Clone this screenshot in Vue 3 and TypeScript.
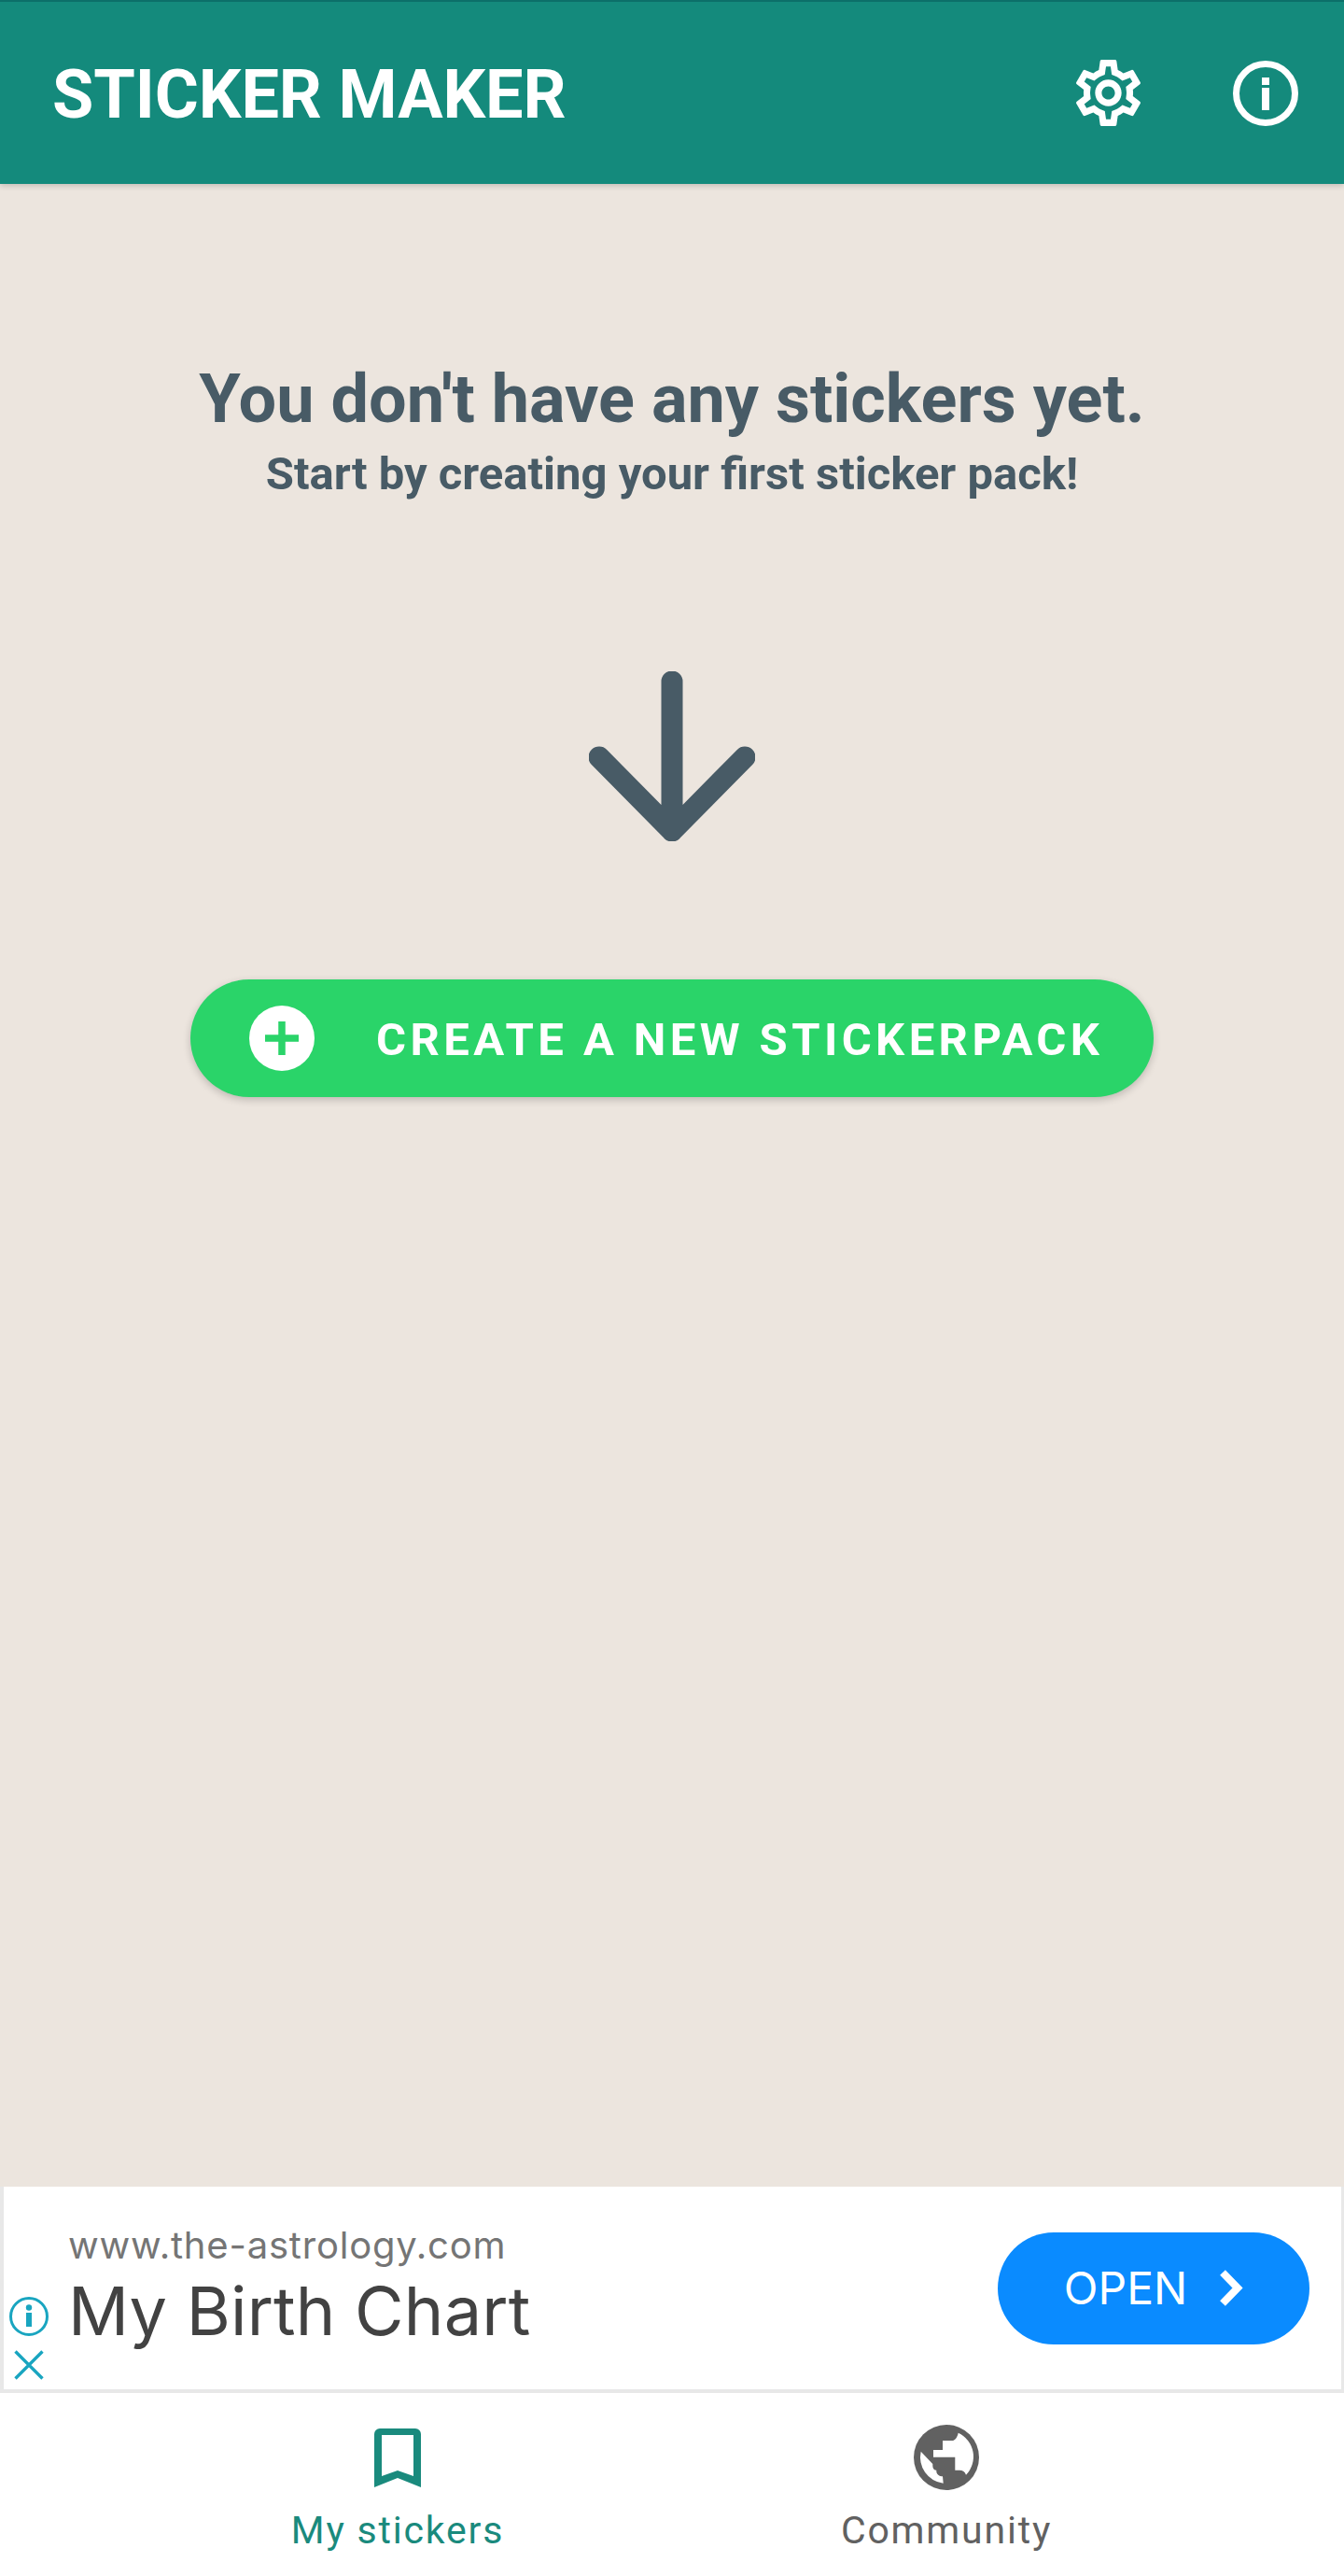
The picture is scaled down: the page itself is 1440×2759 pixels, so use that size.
<script setup lang="ts">
const heading = "You don't have any stickers yet."
const subheading = 'Start by creating your first sticker pack!'
</script>

<template>
  <div class="app">
    <header class="bar">
      <h2 class="brand">STICKER MAKER</h2>
      <div class="bar-actions">
        <svg class="gear" viewBox="0 0 24 24" aria-hidden="true">
          <path fill="#fff" d="M19.43 12.98c.04-.32.07-.64.07-.98 0-.34-.03-.66-.07-.98l2.11-1.65c.19-.15.24-.42.12-.64l-2-3.46c-.09-.16-.26-.25-.44-.25-.06 0-.12.01-.17.03l-2.49 1c-.52-.4-1.08-.73-1.69-.98l-.38-2.65C14.46 2.18 14.25 2 14 2h-4c-.25 0-.46.18-.49.42l-.38 2.65c-.61.25-1.17.59-1.69.98l-2.49-1c-.06-.02-.12-.03-.18-.03-.17 0-.34.09-.43.25l-2 3.46c-.13.22-.07.49.12.64l2.11 1.65c-.04.32-.07.65-.07.98 0 .33.03.66.07.98l-2.11 1.65c-.19.15-.24.42-.12.64l2 3.46c.09.16.26.25.44.25.06 0 .12-.01.17-.03l2.49-1c.52.4 1.08.73 1.69.98l.38 2.65c.03.24.24.42.49.42h4c.25 0 .46-.18.49-.42l.38-2.65c.61-.25 1.17-.59 1.69-.98l2.49 1c.06.02.12.03.18.03.17 0 .34-.09.43-.25l2-3.46c.12-.22.07-.49-.12-.64l-2.11-1.65zm-1.98-1.71c.04.31.05.52.05.73 0 .21-.02.43-.05.73l-.14 1.13.89.7 1.08.84-.7 1.21-1.27-.51-1.04-.42-.9.68c-.43.32-.84.56-1.25.73l-1.06.43-.16 1.13-.2 1.35h-1.4l-.19-1.35-.16-1.13-1.06-.43c-.43-.18-.83-.41-1.23-.71l-.91-.7-1.06.43-1.27.51-.7-1.21 1.08-.84.89-.7-.14-1.13c-.03-.31-.05-.54-.05-.74s.02-.43.05-.73l.14-1.13-.89-.7-1.08-.84.7-1.21 1.27.51 1.04.42.9-.68c.43-.32.84-.56 1.25-.73l1.06-.43.16-1.13.2-1.35h1.39l.19 1.35.16 1.13 1.06.43c.43.18.83.41 1.23.71l.91.7 1.06-.43 1.27-.51.7 1.21-1.07.85-.89.7.14 1.13zM12 8c-2.21 0-4 1.79-4 4s1.79 4 4 4 4-1.79 4-4-1.79-4-4-4zm0 6c-1.1 0-2-.9-2-2s.9-2 2-2 2 .9 2 2-.9 2-2 2z" />
        </svg>
        <svg class="info" viewBox="0 0 70 70" aria-hidden="true">
          <circle cx="35" cy="35" r="31.500" fill="none" stroke="#fff" stroke-width="7" />
          <rect x="31" y="18" width="8" height="8" fill="#fff" />
          <rect x="31" y="29" width="8" height="24" fill="#fff" />
        </svg>
      </div>
    </header>

    <main class="content">
      <h1 class="title">{{ heading }}</h1>
      <p class="subtitle">{{ subheading }}</p>
      <svg class="arrow" viewBox="0 0 178 182" aria-hidden="true">
        <path d="M89 11V171M11 92L89 171L167 92" fill="none" stroke="#485B66" stroke-width="23" stroke-linecap="round" stroke-linejoin="round" />
      </svg>
      <button class="create" type="button">
        <svg class="plus" viewBox="0 0 70 70" aria-hidden="true">
          <circle cx="35" cy="35" r="35" fill="#fff" />
          <path d="M17 35H53M35 17V53" stroke="#2AD469" stroke-width="7.500" fill="none" />
        </svg>
        <span>CREATE A NEW STICKERPACK</span>
      </button>
    </main>

    <section class="ad-wrap">
      <div class="ad">
        <div class="ad-icons">
          <svg class="ad-info" viewBox="0 0 42 42" aria-hidden="true">
            <circle cx="21" cy="21" r="19.500" fill="none" stroke="#19A5C0" stroke-width="3" />
            <circle cx="21" cy="11.500" r="3.200" fill="#19A5C0" />
            <rect x="18" y="17" width="6" height="15" fill="#19A5C0" />
          </svg>
          <svg class="ad-close" viewBox="0 0 32 32" aria-hidden="true">
            <path d="M1.500 1.500L30.500 30.500M30.500 1.500L1.500 30.500" stroke="#19A5C0" stroke-width="3.400" fill="none" />
          </svg>
        </div>
        <div class="ad-text">
          <div class="ad-url">www.the-astrology.com</div>
          <div class="ad-title">My Birth Chart</div>
        </div>
        <button class="open" type="button">
          <span>OPEN</span>
          <svg class="chev" viewBox="0 0 25 39" aria-hidden="true">
            <path d="M3 3L19 19.500L3 36" fill="none" stroke="#fff" stroke-width="8" />
          </svg>
        </button>
      </div>
    </section>

    <nav class="tabs">
      <div class="tab active">
        <div class="tab-icon">
          <svg class="bookmark" viewBox="0 0 50 63" aria-hidden="true">
            <path fill="#1A8A7D" fill-rule="evenodd" d="M0 6a6 6 0 0 1 6-6h38a6 6 0 0 1 6 6v57L25 53 0 63zM8 7V51L25 45 42 51V7z" />
          </svg>
        </div>
        <span>My stickers</span>
      </div>
      <div class="tab">
        <div class="tab-icon">
          <svg class="globe" viewBox="0 0 70 70" aria-hidden="true">
            <circle cx="35" cy="35" r="35" fill="#616161" />
            <path fill="#fff" d="M47.700 8.700A28 28 0 0 1 56 53.700C55 50.500 52.500 48.700 49 48.700H44.300V34.700H21V27H31V17H41C44 17 46.500 14 47.700 8.700Z" />
            <path fill="#fff" d="M7.700 28.700L20.300 42V44C20.300 47 22 48.700 24.300 48.700V50C24.300 53 27.500 55.300 31 55.300L31.700 62.700A28 28 0 0 1 7.700 28.700Z" />
          </svg>
        </div>
        <span>Community</span>
      </div>
    </nav>
  </div>
</template>

<style>
html, body { margin: 0; padding: 0; background: #ece5de; }
</style>

<style scoped>
.app {
  width: 1440px;
  height: 2759px;
  display: flex;
  flex-direction: column;
  background: #ece5de;
  font-family: Roboto, "Liberation Sans", sans-serif;
  overflow: hidden;
}
.bar {
  height: 197px;
  box-sizing: border-box;
  flex: none;
  background: #148a7c;
  border-top: 2px solid #0c6f69;
  box-shadow: 0 2px 6px rgba(0, 0, 0, 0.18);
  display: flex;
  align-items: center;
  justify-content: space-between;
  padding: 0 49px 0 56px;
  position: relative;
}
.brand {
  margin: 4px 0 0;
  color: #fff;
  font-size: 72px;
  line-height: 84px;
  font-weight: 700;
  letter-spacing: -0.1px;
  white-space: nowrap;
}
.bar-actions {
  display: flex;
  align-items: center;
}
.gear { width: 85px; height: 85px; display: block; margin-right: 91px; margin-top: -1px; }
.info { width: 70px; height: 70px; display: block; }
.content {
  flex: 1;
  display: flex;
  flex-direction: column;
  align-items: center;
  padding-top: 189px;
  box-sizing: border-box;
  min-height: 0;
}
.title {
  margin: 0;
  color: #485b66;
  font-size: 72px;
  line-height: 84px;
  font-weight: 700;
  white-space: nowrap;
}
.subtitle {
  margin: 9px 0 0;
  color: #485b66;
  font-size: 49px;
  line-height: 57px;
  font-weight: 700;
  white-space: nowrap;
}
.arrow {
  width: 178px;
  height: 182px;
  display: block;
  margin-top: 183px;
  flex: none;
}
.create {
  margin-top: 148px;
  width: 1032px;
  height: 126px;
  flex: none;
  border: 0;
  border-radius: 63px;
  background: #2ad469;
  box-shadow: 0 3px 8px rgba(0, 0, 0, 0.2);
  display: flex;
  align-items: center;
  padding: 0 0 0 63px;
  gap: 66px;
  color: #fff;
  font-family: inherit;
  font-size: 49px;
  line-height: 57px;
  font-weight: 700;
  letter-spacing: 4.400px;
  white-space: nowrap;
}
.create span { margin-top: 3px; }
.plus { width: 70px; height: 70px; display: block; flex: none; }
.ad-wrap {
  flex: none;
  height: 221px;
  box-sizing: border-box;
  padding: 0 3px 4px 4px;
  background: #e8e8e8;
}
.ad {
  height: 217px;
  background: #fff;
  display: flex;
}
.ad-icons {
  width: 42px;
  margin-left: 6px;
  flex: none;
  display: flex;
  flex-direction: column;
  align-items: center;
  justify-content: flex-end;
  padding-bottom: 10px;
  gap: 15px;
}
.ad-info { width: 42px; height: 42px; display: block; }
.ad-close { width: 32px; height: 32px; display: block; }
.ad-text {
  margin-left: 21px;
  padding-top: 39px;
  flex: 1;
  font-family: Inter, "Open Sans", sans-serif;
}
.ad-url {
  color: #757575;
  font-size: 40px;
  line-height: 48px;
  letter-spacing: 0.800px;
}
.ad-title {
  margin-top: 4px;
  color: #424242;
  font-size: 72px;
  line-height: 84px;
  letter-spacing: 0.200px;
}
.open {
  flex: none;
  align-self: center;
  width: 334px;
  height: 120px;
  margin: 0 34px 0 0;
  border: 0;
  border-radius: 60px;
  background: #0a8bff;
  color: #fff;
  display: flex;
  align-items: center;
  justify-content: center;
  gap: 35px;
  font-family: Inter, "Open Sans", sans-serif;
  font-size: 48px;
  padding: 0;
}
.chev { width: 25px; height: 39px; display: block; }
.tabs {
  flex: none;
  height: 196px;
  box-sizing: border-box;
  background: #fff;
  padding: 34px 132px 0;
  display: grid;
  grid-template-columns: 1fr 1fr;
}
.tab {
  display: flex;
  flex-direction: column;
  align-items: center;
  color: #616161;
  font-size: 41px;
  line-height: 48px;
  letter-spacing: 1.800px;
}
.tab.active { color: #1a8a7d; }
.tab-icon {
  height: 70px;
  display: flex;
  align-items: center;
  justify-content: center;
  margin-bottom: 19px;
}
.bookmark { width: 50px; height: 63px; display: block; }
.globe { width: 70px; height: 70px; display: block; }
</style>
